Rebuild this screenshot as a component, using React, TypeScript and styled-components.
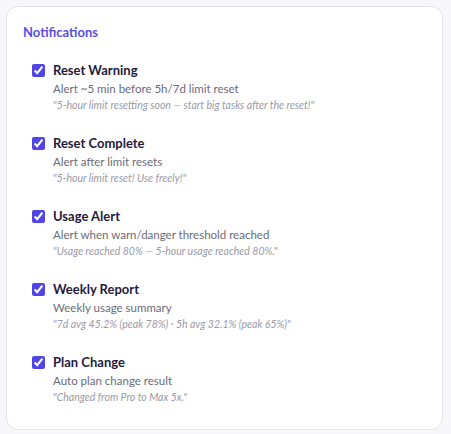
import React, { useState } from 'react';
import styled, { createGlobalStyle } from 'styled-components';

const GlobalStyle = createGlobalStyle`
  html, body {
    margin: 0;
    padding: 0;
    background: #f7f7f9;
  }
  body {
    font-family: Lato, 'Noto Sans', sans-serif;
  }
`;

const Page = styled.div`
  padding: 6px 8px 7px 6px;
`;

const Card = styled.section`
  background: #ffffff;
  border: 1px solid #e4e4e9;
  border-radius: 12px;
  padding: 16px 16px 24px 16px;
`;

const Heading = styled.h2`
  margin: 0 0 21px 0;
  font-size: 13px;
  font-weight: 700;
  line-height: 18px;
  color: #5a4ee6;
`;

const List = styled.div`
  display: flex;
  flex-direction: column;
  gap: 22px;
  padding-left: 9px;
`;

const Row = styled.label`
  display: flex;
  align-items: flex-start;
  gap: 8px;
  cursor: pointer;
`;

const Check = styled.input`
  width: 13px;
  height: 13px;
  margin: 2px 0 0 0;
  accent-color: #4f46e5;
  flex-shrink: 0;
`;

const Body = styled.div`
  display: flex;
  flex-direction: column;
`;

const Title = styled.span`
  font-size: 13px;
  font-weight: 700;
  line-height: 17px;
  color: #1f1b3d;
`;

const Desc = styled.span`
  margin-top: 2px;
  font-size: 11.5px;
  line-height: 16px;
  color: #6b6b78;
`;

const Example = styled.span`
  margin-top: 1px;
  font-size: 10.5px;
  font-style: italic;
  line-height: 15px;
  color: #9a9aa6;
`;

const items = [
  {
    id: 'reset-warning',
    title: 'Reset Warning',
    desc: 'Alert ~5 min before 5h/7d limit reset',
    example: '"5-hour limit resetting soon — start big tasks after the reset!"',
  },
  {
    id: 'reset-complete',
    title: 'Reset Complete',
    desc: 'Alert after limit resets',
    example: '"5-hour limit reset! Use freely!"',
  },
  {
    id: 'usage-alert',
    title: 'Usage Alert',
    desc: 'Alert when warn/danger threshold reached',
    example: '"Usage reached 80% — 5-hour usage reached 80%."',
  },
  {
    id: 'weekly-report',
    title: 'Weekly Report',
    desc: 'Weekly usage summary',
    example: '"7d avg 45.2% (peak 78%) · 5h avg 32.1% (peak 65%)"',
  },
  {
    id: 'plan-change',
    title: 'Plan Change',
    desc: 'Auto plan change result',
    example: '"Changed from Pro to Max 5x."',
  },
];

const App: React.FC = () => {
  const [enabled, setEnabled] = useState<Record<string, boolean>>(
    Object.fromEntries(items.map((i) => [i.id, true]))
  );

  return (
    <Page>
      <GlobalStyle />
      <Card>
        <Heading>Notifications</Heading>
        <List>
          {items.map((item) => (
            <Row key={item.id}>
              <Check
                type="checkbox"
                checked={enabled[item.id]}
                onChange={(e) => setEnabled({ ...enabled, [item.id]: e.target.checked })}
              />
              <Body>
                <Title>{item.title}</Title>
                <Desc>{item.desc}</Desc>
                <Example>{item.example}</Example>
              </Body>
            </Row>
          ))}
        </List>
      </Card>
    </Page>
  );
};

export default App;
